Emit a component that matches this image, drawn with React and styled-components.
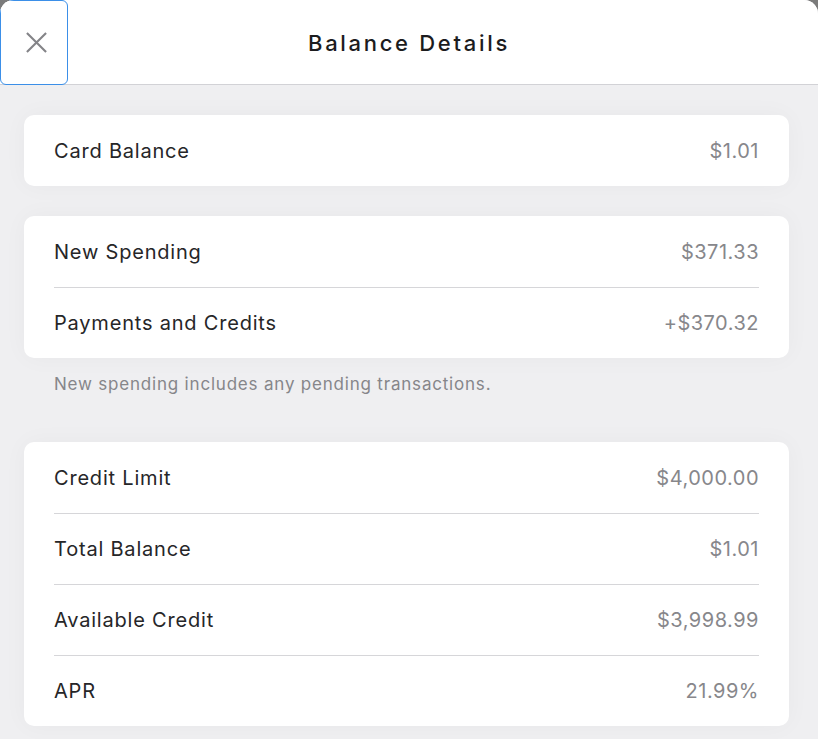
import React from 'react';
import styled, { createGlobalStyle } from 'styled-components';

const Global = createGlobalStyle`
  html, body {
    margin: 0;
    padding: 0;
    background: #7b7b7b;
    font-family: Inter, "Noto Sans", sans-serif;
    -webkit-font-smoothing: antialiased;
  }
`;

const Sheet = styled.div`
  width: 818px;
  height: 739px;
  border-radius: 14px 14px 0 0;
  overflow: hidden;
  background: #efeff1;
  display: flex;
  flex-direction: column;
`;

const Header = styled.header`
  position: relative;
  height: 84px;
  flex-shrink: 0;
  background: #fff;
  border-bottom: 1px solid #d2d2d6;
  display: flex;
  align-items: center;
  justify-content: center;
`;

const Title = styled.h1`
  margin: 2px 0 0 0;
  font-size: 22px;
  font-weight: 500;
  letter-spacing: 2.7px;
  color: #1c1c1e;
`;

const CloseButton = styled.button`
  position: absolute;
  left: 0;
  top: 0;
  width: 68px;
  height: 85px;
  box-sizing: border-box;
  background: #fff;
  border: 1px solid #3b8fe8;
  border-radius: 6px;
  display: flex;
  align-items: center;
  justify-content: center;
  padding: 0 0 0 4px;
  cursor: pointer;
`;

const Body = styled.main`
  flex: 1;
  padding: 30px 29px 0 24px;
  display: flex;
  flex-direction: column;
`;

const Card = styled.section`
  background: #fff;
  border-radius: 10px;
  padding: 0 30px;
  box-shadow: 0 0 24px rgba(0, 0, 0, 0.035);
  margin-bottom: ${p => p.$gap || 0}px;
`;

const Row = styled.div`
  height: 71px;
  box-sizing: border-box;
  display: flex;
  align-items: center;
  justify-content: space-between;
  font-size: 20px;
  letter-spacing: 0.8px;
  & + & {
    border-top: 1px solid #d6d6d9;
  }
`;

const Label = styled.span`
  color: #262628;
`;

const Value = styled.span`
  color: #87878b;
  letter-spacing: 0.5px;
`;

const Note = styled.p`
  margin: 0 0 0 30px;
  height: 84px;
  padding-top: 16px;
  box-sizing: border-box;
  font-size: 17px;
  letter-spacing: 0.8px;
  color: #86868a;
`;

const Close = () => (
  <svg width="23" height="23" viewBox="0 0 24 24" fill="none" stroke="#848488" strokeWidth="2.2">
    <path d="M2 2 L22 22 M22 2 L2 22" />
  </svg>
);

const rows = (items) =>
  items.map(([l, v]) => (
    <Row key={l}>
      <Label>{l}</Label>
      <Value>{v}</Value>
    </Row>
  ));

export default function App() {
  return (
    <>
      <Global />
      <Sheet>
        <Header>
          <CloseButton aria-label="Close"><Close /></CloseButton>
          <Title>Balance Details</Title>
        </Header>
        <Body>
          <Card $gap={30}>{rows([['Card Balance', '$1.01']])}</Card>
          <Card>{rows([['New Spending', '$371.33'], ['Payments and Credits', '+$370.32']])}</Card>
          <Note>New spending includes any pending transactions.</Note>
          <Card>
            {rows([
              ['Credit Limit', '$4,000.00'],
              ['Total Balance', '$1.01'],
              ['Available Credit', '$3,998.99'],
              ['APR', '21.99%'],
            ])}
          </Card>
        </Body>
      </Sheet>
    </>
  );
}
